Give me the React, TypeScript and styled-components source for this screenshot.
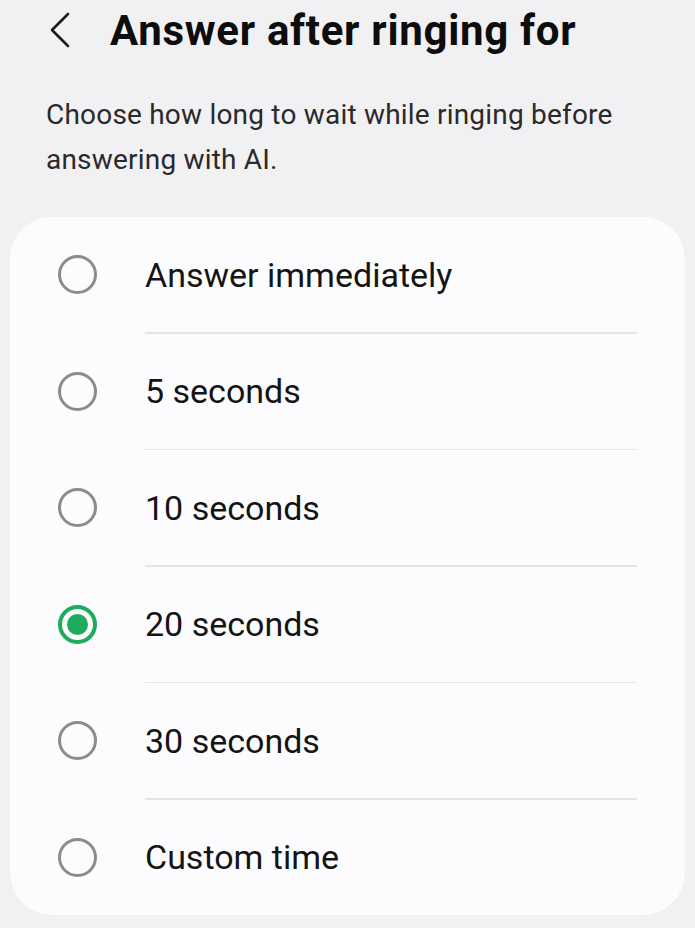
import React, { useState } from 'react';
import styled, { createGlobalStyle } from 'styled-components';

const GlobalStyle = createGlobalStyle`
  html, body {
    margin: 0;
    padding: 0;
    background: #f1f1f3;
  }
  body {
    font-family: Roboto, 'Noto Sans', sans-serif;
    color: #111;
  }
`;

const Page = styled.div`
  width: 695px;
  height: 928px;
  overflow: hidden;
  background: #f1f1f3;
`;

const Header = styled.header`
  display: flex;
  align-items: center;
  height: 60px;
  padding-left: 46px;
`;

const BackButton = styled.button`
  display: flex;
  align-items: center;
  justify-content: center;
  width: 28px;
  height: 40px;
  margin-right: 36px;
  padding: 0;
  border: none;
  background: none;
  cursor: pointer;
`;

const Title = styled.h1`
  margin: 0;
  font-size: 42px;
  font-weight: 700;
  letter-spacing: 0.7px;
  color: #0d0d0d;
`;

const Description = styled.p`
  margin: 32px 46px 0;
  font-size: 28px;
  line-height: 45px;
  letter-spacing: 0.2px;
  color: #2a2a2a;
`;

const Card = styled.ul`
  list-style: none;
  margin: 35px 10px 0;
  padding: 0;
  background: #fcfcfe;
  border-radius: 42px;
`;

const Option = styled.li`
  display: flex;
  align-items: center;
  height: 115px;
  cursor: pointer;
`;

const Divider = styled.li`
  height: 1.5px;
  margin: 0 48px 0 135px;
  background: #e4e4e6;
`;

const Radio = styled.span<{ $checked: boolean }>`
  box-sizing: border-box;
  display: flex;
  align-items: center;
  justify-content: center;
  width: 39px;
  height: 39px;
  margin: 0 48px 0 48px;
  border-radius: 50%;
  border: ${(p) => (p.$checked ? '4.5px solid #1dab5e' : '3px solid #8c8c8c')};
  &::after {
    content: '';
    display: ${(p) => (p.$checked ? 'block' : 'none')};
    width: 21px;
    height: 21px;
    border-radius: 50%;
    background: #1dab5e;
  }
`;

const Label = styled.span`
  font-size: 34px;
  color: #141414;
`;

const options = [
  'Answer immediately',
  '5 seconds',
  '10 seconds',
  '20 seconds',
  '30 seconds',
  'Custom time',
];

const ChevronLeft = () => (
  <svg width="22" height="36" viewBox="0 0 22 36" fill="none">
    <path d="M19 2 L3 18 L19 34" stroke="#1a1a1a" strokeWidth="2.6" strokeLinecap="round" strokeLinejoin="round" />
  </svg>
);

const App = () => {
  const [selected, setSelected] = useState('20 seconds');

  return (
    <Page>
      <GlobalStyle />
      <Header>
        <BackButton aria-label="Back">
          <ChevronLeft />
        </BackButton>
        <Title>Answer after ringing for</Title>
      </Header>
      <Description>Choose how long to wait while ringing before answering with AI.</Description>
      <Card>
        {options.map((option, i) => (
          <React.Fragment key={option}>
            {i > 0 && <Divider />}
            <Option onClick={() => setSelected(option)}>
              <Radio $checked={selected === option} />
              <Label>{option}</Label>
            </Option>
          </React.Fragment>
        ))}
      </Card>
    </Page>
  );
};

export default App;
